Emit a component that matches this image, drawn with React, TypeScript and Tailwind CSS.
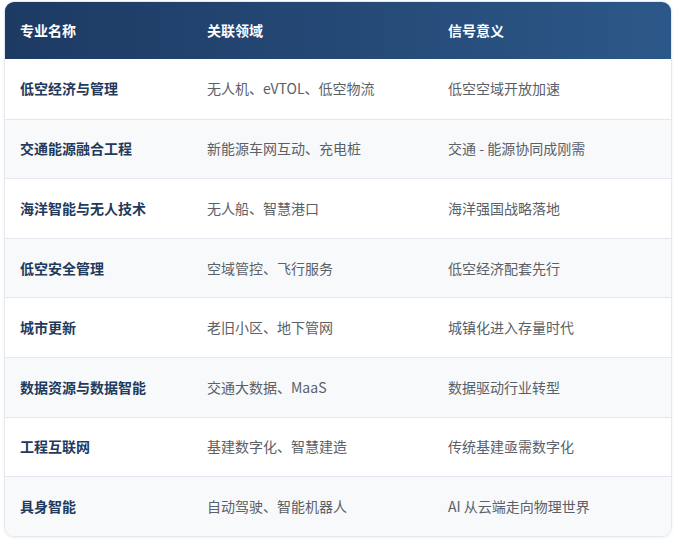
import React from "react";

const rows = [
  ["低空经济与管理", "无人机、eVTOL、低空物流", "低空空域开放加速"],
  ["交通能源融合工程", "新能源车网互动、充电桩", "交通 - 能源协同成刚需"],
  ["海洋智能与无人技术", "无人船、智慧港口", "海洋强国战略落地"],
  ["低空安全管理", "空域管控、飞行服务", "低空经济配套先行"],
  ["城市更新", "老旧小区、地下管网", "城镇化进入存量时代"],
  ["数据资源与数据智能", "交通大数据、MaaS", "数据驱动行业转型"],
  ["工程互联网", "基建数字化、智慧建造", "传统基建亟需数字化"],
  ["具身智能", "自动驾驶、智能机器人", "AI 从云端走向物理世界"],
];

function App() {
  return (
    <div
      className="w-[676px] h-[540px] bg-white pt-[1px] px-[4px]"
      style={{ fontFamily: '"Noto Sans CJK SC", "Noto Sans", sans-serif' }}
    >
      <div className="w-[668px] rounded-[10px] overflow-hidden border border-[#e5e9ef] shadow-[0_1px_3px_rgba(0,0,0,0.06)]">
        <div className="grid grid-cols-[186px_241px_241px] h-[57px] items-center bg-gradient-to-r from-[#1d3a63] to-[#2c5889] text-white text-[14px] font-bold">
          <div className="pl-[15px]">专业名称</div>
          <div className="pl-[16px]">关联领域</div>
          <div className="pl-[16px]">信号意义</div>
        </div>
        {rows.map((r, i) => (
          <div
            key={i}
            className={`grid grid-cols-[186px_241px_241px] h-[59.6px] items-center text-[14px] ${
              i % 2 === 1 ? "bg-[#f7f9fb]" : "bg-white"
            } ${i > 0 ? "border-t border-[#e3e8ee]" : ""}`}
          >
            <div className="pl-[15px] font-bold text-[#1f3a5c]">{r[0]}</div>
            <div className="pl-[16px] text-[#5a6068]">{r[1]}</div>
            <div className="pl-[16px] text-[#5a6068]">{r[2]}</div>
          </div>
        ))}
      </div>
    </div>
  );
}

export default App;
